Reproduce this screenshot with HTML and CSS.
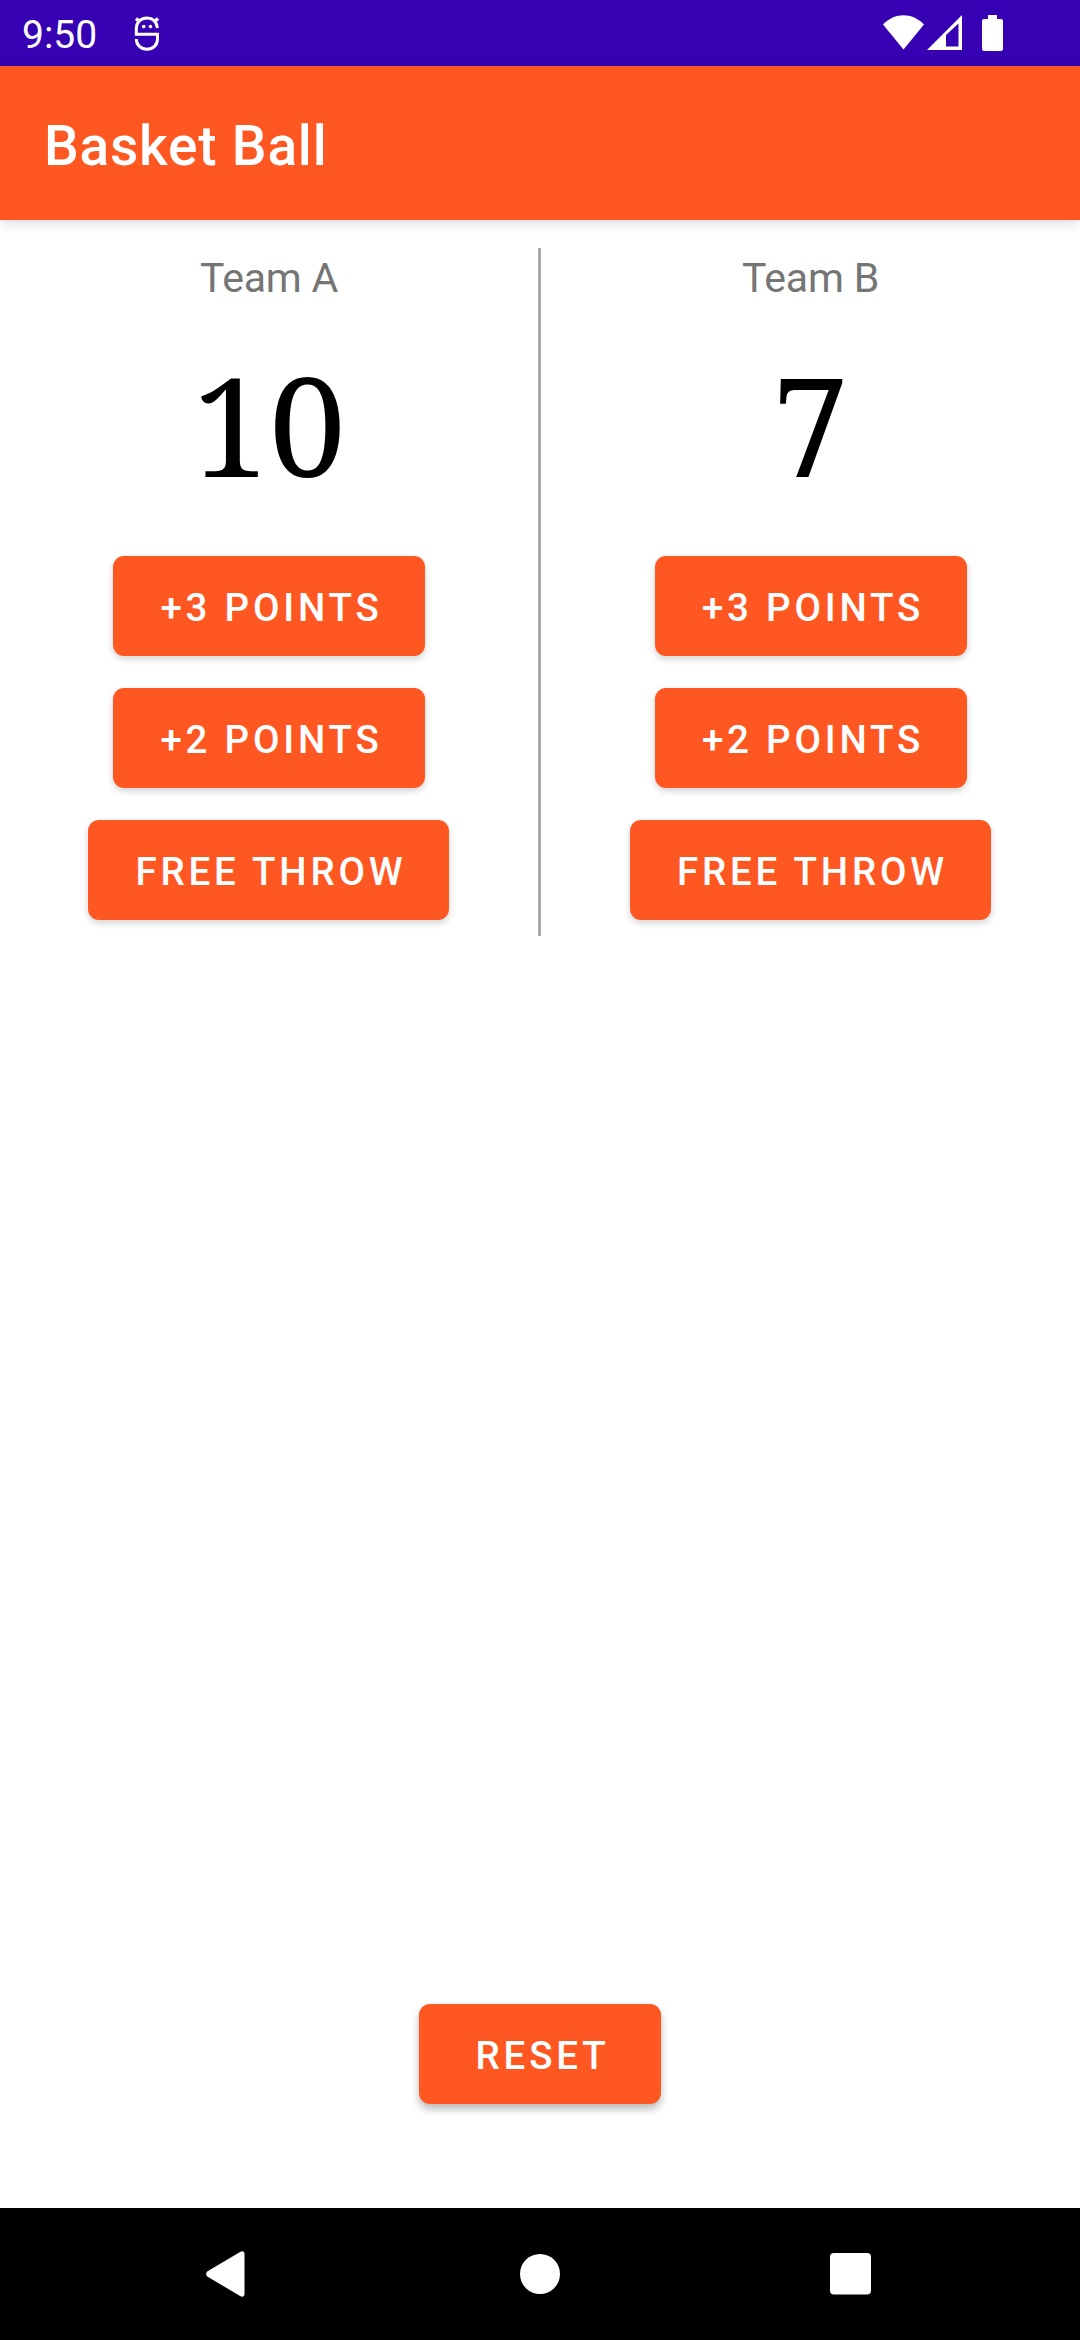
FILE: index.html
```html
<!DOCTYPE html>
<html lang="en">
<head>
<meta charset="utf-8">
<title>Basket Ball</title>
<link rel="stylesheet" href="styles.css">
</head>
<body>
<div class="screen">
  <div class="status-bar">
    <span class="clock">9:50</span>
    <svg class="icon-debug" width="26" height="36" viewBox="0 0 26 36" fill="none" stroke="#fff" stroke-width="3">
      <path d="M23.500 12C22.500 5.500 18.500 2 13 2C6 2 2.300 7 2.300 12.500V18.200H23.500V23C23.500 29 19 33.200 13 33.200C7 33.200 2.300 29 2.300 23"/>
      <path d="M2 2.500L6 6M24 2.500L20 6" stroke-width="3.500"/>
      <circle cx="9.700" cy="10.600" r="1.800" fill="#fff" stroke="none"/>
      <circle cx="16.500" cy="10.600" r="1.800" fill="#fff" stroke="none"/>
    </svg>
    <svg class="icon-wifi" width="41" height="35" viewBox="0 0 41 35" fill="#fff"><path d="M0 9.500C6 3.500 13 .3 20.500 .3S35 3.500 41 9.500L20.500 34.500Z"/></svg>
    <svg class="icon-signal" width="35" height="35" viewBox="0 0 35 35" fill="#fff"><path fill-rule="evenodd" d="M0 35L35 0V35ZM19 20V31.500H31.500V8.500Z"/></svg>
    <svg class="icon-battery" width="21" height="36" viewBox="0 0 21 36" fill="#fff"><path d="M6 0H15V4H19Q21 4 21 6V34Q21 36 19 36H2Q0 36 0 34V6Q0 4 2 4H6Z"/></svg>
  </div>
  <header class="app-bar"><h1 class="title">Basket Ball</h1></header>
  <main class="content">
    <div class="scoreboard">
      <section class="team">
        <h2 class="team-name">Team A</h2>
        <div class="score">10</div>
        <button class="btn">+3 POINTS</button>
        <button class="btn">+2 POINTS</button>
        <button class="btn btn-wide">FREE THROW</button>
      </section>
      <div class="divider"></div>
      <section class="team">
        <h2 class="team-name">Team B</h2>
        <div class="score">7</div>
        <button class="btn">+3 POINTS</button>
        <button class="btn">+2 POINTS</button>
        <button class="btn btn-wide">FREE THROW</button>
      </section>
    </div>
    <button class="btn btn-reset">RESET</button>
  </main>
  <nav class="nav-bar">
    <svg class="nav-back" width="39" height="46" viewBox="0 0 39 46" fill="#fff"><path d="M1.200 20.500L34.500 .8Q38.500-.8 38.500 3.500V42.500Q38.500 46.800 34.500 45.200L1.200 25.500Q-1 23 1.200 20.500Z"/></svg>
    <svg class="nav-home" width="40" height="40" viewBox="0 0 40 40" fill="#fff"><circle cx="20" cy="20" r="20"/></svg>
    <svg class="nav-recent" width="41" height="42" viewBox="0 0 41 42" fill="#fff"><rect width="41" height="41.500" rx="4"/></svg>
  </nav>
</div>
</body>
</html>
```
FILE: styles.css
```css
* { box-sizing: border-box; }
body { margin: 0; background: #fff; font-family: Roboto, sans-serif; }
h1, h2 { margin: 0; }
svg { display: block; flex: none; }

.screen { width: 1080px; height: 2340px; display: flex; flex-direction: column; overflow: hidden; }

.status-bar { height: 66px; background: #3700b3; display: flex; align-items: flex-start; padding: 15px 77px 0 22px; }
.clock { width: 112px; color: #fff; font-size: 39px; line-height: 40px; }
.icon-debug { margin-top: 1px; }
.icon-wifi { margin-left: auto; }
.icon-signal { margin-left: 3px; }
.icon-battery { margin-left: 20px; }

.app-bar { height: 154px; background: #ff5722; display: flex; align-items: center; padding: 5px 44px 0; box-shadow: 0 3px 12px rgba(0, 0, 0, .14); }
.title { color: #fff; font-size: 55px; font-weight: 500; line-height: 64px; letter-spacing: .8px; }

.content { flex: 1; display: flex; flex-direction: column; align-items: center; justify-content: space-between; padding: 28px 0 104px; }
.scoreboard { width: 1080px; height: 688px; display: grid; grid-template-columns: 538px 3px 539px; }
.divider { background: #a6a6a6; }
.team { display: flex; flex-direction: column; align-items: center; }
.team-name { height: 60px; color: #757575; font-size: 41px; font-weight: 400; line-height: 60px; letter-spacing: -.2px; }
.score { height: 248px; color: #000; font-family: "Noto Serif", "DejaVu Serif Condensed", "Liberation Serif", serif; font-size: 137.5px; line-height: 232px; }

.btn { flex: none; width: 312px; height: 100px; margin: 0 0 32px; padding: 3px 0 0 5px; border: 0; border-radius: 11px; background: #ff5722; color: #fff; font: 500 38.5px/46px Roboto, sans-serif; letter-spacing: 3.78px; box-shadow: 0 3px 7px rgba(0, 0, 0, .18); }
.btn-wide { width: 361px; margin: 0 1px 16px 0; }
.btn-reset { width: 242px; margin: 0; box-shadow: 0 5px 8px rgba(0, 0, 0, .28); }

.nav-bar { height: 132px; background: #000; display: flex; align-items: center; justify-content: space-between; padding: 0 209px 0 206px; }
.nav-home { margin-left: 5px; }
```
